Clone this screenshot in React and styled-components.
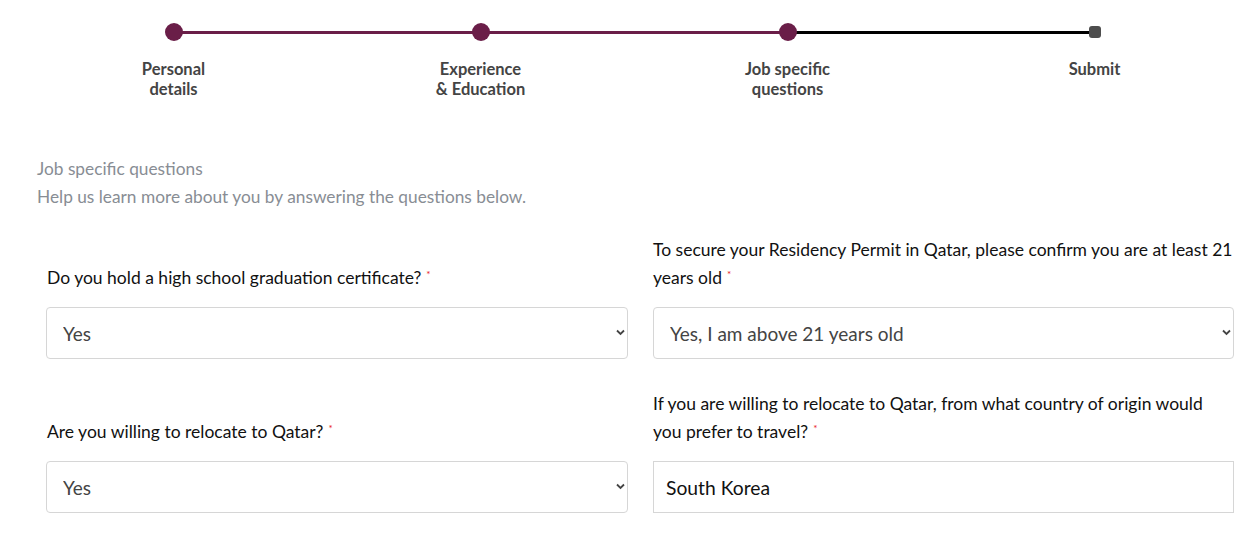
import React from "react";
import styled, { createGlobalStyle } from "styled-components";

const Global = createGlobalStyle`
  html, body { margin: 0; padding: 0; background: #fff; }
  body { font-family: Lato, "Open Sans", sans-serif; }
  * { box-sizing: border-box; }
`;

const Page = styled.div`
  width: 1254px;
  padding: 0 20px 0 20px;
`;

const Stepper = styled.div`
  display: grid;
  grid-template-columns: repeat(4, 307px);
  padding-top: 23px;
`;

const Step = styled.div`
  position: relative;
  display: flex;
  flex-direction: column;
  align-items: center;
`;

const Track = styled.div`
  position: absolute;
  top: 8px;
  left: 50%;
  width: 100%;
  height: 3px;
  background: ${(p) => p.$color};
`;

const Dot = styled.div`
  position: relative;
  z-index: 1;
  width: 18px;
  height: 18px;
  border-radius: 50%;
  background: #6a1e48;
`;

const Square = styled.div`
  position: relative;
  z-index: 1;
  margin-top: 3px;
  margin-bottom: 3px;
  width: 12px;
  height: 12px;
  border-radius: 3px;
  background: #4d4d4d;
`;

const StepLabel = styled.div`
  margin-top: 18px;
  font-size: 16.5px;
  font-weight: 700;
  line-height: 20px;
  color: #444;
  text-align: center;
`;

const Intro = styled.div`
  margin-top: 56px;
  padding-left: 17px;
  color: #888d94;
  font-size: 17.3px;
  line-height: 28px;
`;

const FormGrid = styled.div`
  display: grid;
  grid-template-columns: 582px 581px;
  column-gap: 25px;
  row-gap: 31px;
  padding-left: 26px;
  margin-top: 25px;
`;

const Field = styled.div`
  display: flex;
  flex-direction: column;
  justify-content: flex-end;
`;

const Label = styled.label`
  font-size: 17.5px;
  line-height: 28px;
  color: #111;
  padding-left: ${(p) => (p.$left ? "1px" : "0")};
  margin-bottom: 15px;
`;

const Star = styled.span`
  display: inline-block;
  line-height: 10px;
  vertical-align: 6px;
  color: #e8151b;
  font-size: 10px;
  margin-left: 5px;
`;

const SelectWrap = styled.div`
  position: relative;
  height: 52px;
`;

const Select = styled.select`
  appearance: none;
  width: 100%;
  height: 52px;
  border: 1px solid #d6d6d6;
  border-radius: 4px;
  background: #fff;
  padding: 0 16px;
  font-family: inherit;
  font-size: 19px;
  color: #444;
  outline: none;
`;

const Chevron = styled.svg`
  position: absolute;
  right: 3px;
  top: 22px;
  pointer-events: none;
`;

const TextInput = styled.input`
  width: 100%;
  height: 52px;
  border: 1px solid #d6d6d6;
  border-radius: 0;
  padding: 0 12px;
  font-family: inherit;
  font-size: 19.3px;
  color: #111;
  outline: none;
`;

const steps = [
  { label: ["Personal", "details"], track: "#6a1e48" },
  { label: ["Experience", "& Education"], track: "#6a1e48" },
  { label: ["Job specific", "questions"], track: "#000" },
  { label: ["Submit"], square: true },
];

function SelectField({ value, options }) {
  return (
    <SelectWrap>
      <Select defaultValue={value}>
        {options.map((o) => (
          <option key={o}>{o}</option>
        ))}
      </Select>
      <Chevron width="9" height="7" viewBox="0 0 9 7">
        <path d="M1 1.5 L4.5 5 L8 1.5" fill="none" stroke="#444" strokeWidth="1.8" />
      </Chevron>
    </SelectWrap>
  );
}

export default function App() {
  return (
    <Page>
      <Global />
      <Stepper>
        {steps.map((s, i) => (
          <Step key={i}>
            {s.track && <Track $color={s.track} />}
            {s.square ? <Square /> : <Dot />}
            <StepLabel>
              {s.label.map((l, j) => (
                <div key={j}>{l}</div>
              ))}
            </StepLabel>
          </Step>
        ))}
      </Stepper>
      <Intro>
        <div>Job specific questions</div>
        <div>Help us learn more about you by answering the questions below.</div>
      </Intro>
      <FormGrid>
        <Field>
          <Label $left>
            Do you hold a high school graduation certificate?<Star>*</Star>
          </Label>
          <SelectField value="Yes" options={["Yes", "No"]} />
        </Field>
        <Field>
          <Label>
            To secure your Residency Permit in Qatar, please confirm you are at least 21 years old<Star>*</Star>
          </Label>
          <SelectField
            value="Yes, I am above 21 years old"
            options={["Yes, I am above 21 years old", "No, I am below 21 years old"]}
          />
        </Field>
        <Field>
          <Label $left>
            Are you willing to relocate to Qatar?<Star>*</Star>
          </Label>
          <SelectField value="Yes" options={["Yes", "No"]} />
        </Field>
        <Field>
          <Label>
            If you are willing to relocate to Qatar, from what country of origin would you prefer to travel?<Star>*</Star>
          </Label>
          <TextInput defaultValue="South Korea" />
        </Field>
      </FormGrid>
    </Page>
  );
}
